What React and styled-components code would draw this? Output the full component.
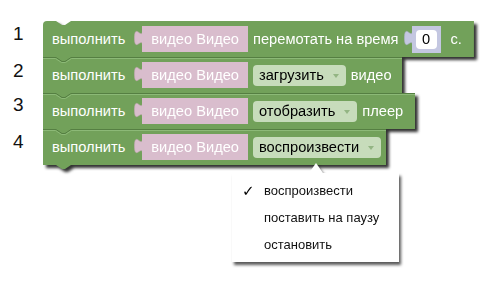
import React from "react";
import styled, { createGlobalStyle, css } from "styled-components";

const GREEN = "#72a15a";
const PINK = "#d9bdcd";
const PINK_EDGE = "#c7a9b9";
const LAV = "#c4c7e1";
const LAV_EDGE = "#b0b3d0";
const DD_BG = "#c7dcbb";

const Global = createGlobalStyle`
  html, body { margin: 0; padding: 0; background: #fff; }
  body { font-family: "Liberation Sans", Arial, sans-serif; }
`;

const Page = styled.div`
  position: relative;
  width: 501px;
  height: 290px;
  padding-top: 21px;
  box-sizing: border-box;
  overflow: hidden;
`;

const Workspace = styled.div`
  display: flex;
  align-items: flex-start;
`;

const Labels = styled.div`
  display: grid;
  grid-auto-rows: 36px;
  width: 43px;
  padding-left: 13px;
  box-sizing: border-box;
`;

const Num = styled.div`
  font-size: 19px;
  line-height: 19px;
  padding-top: ${(p) => p.$top}px;
  color: #111;
`;

const Stack = styled.div`
  display: flex;
  flex-direction: column;
  align-items: flex-start;
  filter: drop-shadow(3px 3px 1.5px rgba(0, 0, 0, 0.8));
`;

const Block = styled.div`
  position: relative;
  display: flex;
  align-items: center;
  height: 36px;
  background: ${GREEN};
  padding-left: 9px;
  padding-right: ${(p) => p.$pr}px;
  gap: 5px;
  color: #fff;
  font-size: 14.67px;
  white-space: nowrap;
  ${(p) =>
    p.$first &&
    css`
      border-top-left-radius: 4px;
      clip-path: polygon(0 0, 13px 0, 19px 4px, 22px 4px, 28px 0, 100% 0, 100% 100%, 0 100%);
    `}
  ${(p) =>
    p.$last &&
    css`
      &::after {
        content: "";
        position: absolute;
        left: 13px;
        bottom: -4px;
        width: 15px;
        height: 4px;
        background: ${GREEN};
        clip-path: polygon(0 0, 100% 0, 9px 100%, 6px 100%);
      }
    `}
`;

const Seam = styled.svg`
  position: absolute;
  top: 0;
  left: 0;
  width: 100%;
  height: 6px;
  overflow: hidden;
  pointer-events: none;
`;

const Label = styled.span`
  display: block;
  margin-left: ${(p) => p.$ml || 0}px;
  margin-right: ${(p) => p.$mr || 0}px;
`;

const Socket = styled.div`
  display: flex;
  align-items: center;
`;

const TabSvg = styled.svg`
  display: block;
  flex: none;
  width: 8px;
  height: ${(p) => p.$h}px;
`;

const ValueBox = styled.div`
  display: flex;
  align-items: center;
  height: ${(p) => p.$h}px;
  padding: 0 ${(p) => p.$px}px;
  background: ${(p) => p.$bg};
  box-sizing: border-box;
  color: #fff;
`;

const NumberField = styled.div`
  display: flex;
  align-items: center;
  justify-content: center;
  width: 21px;
  height: 19px;
  border-radius: 4px;
  background: #fff;
  color: #000;
`;

const Dropdown = styled.div`
  display: flex;
  align-items: center;
  gap: 9px;
  height: 21px;
  padding: 0 7px 0 6px;
  border-radius: 4px;
  background: ${DD_BG};
  color: #000;
`;

const Caret = styled.span`
  display: block;
  width: 0;
  height: 0;
  border-left: 3px solid transparent;
  border-right: 3px solid transparent;
  border-top: 4px solid #93b583;
  margin-top: 1px;
`;

const Menu = styled.div`
  position: absolute;
  left: 232px;
  top: 173px;
  width: 167px;
  padding: 4px 0;
  background: #fff;
  filter: drop-shadow(2px 3px 1.5px rgba(0, 0, 0, 0.65));
  &::before {
    content: "";
    position: absolute;
    top: -10px;
    left: 77px;
    width: 14px;
    height: 10px;
    background: #fff;
    clip-path: polygon(50% 0, 100% 100%, 0 100%);
  }
`;

const MenuItem = styled.div`
  position: relative;
  display: flex;
  align-items: center;
  height: 27px;
  padding-left: 32px;
  font-size: 13px;
  color: #111;
`;

const Check = styled.span`
  position: absolute;
  left: 10px;
  top: 50%;
  transform: translateY(-50%);
  font-family: "DejaVu Sans", sans-serif;
  font-size: 15px;
  color: #000;
`;

function Tab({ fill, stroke, h = 26 }) {
  return (
    <TabSvg $h={h} viewBox={`0 0 8 ${h}`}>
      <path
        d="M8.5,4.5 c0,10 -8,-8 -8,7.5 s8,-2.5 8,8 Z"
        fill={fill}
        stroke={stroke}
        strokeWidth="0.6"
      />
    </TabSvg>
  );
}

function VideoInput() {
  return (
    <Socket>
      <Tab fill={PINK} stroke={PINK_EDGE} />
      <ValueBox $h={26} $px={9} $bg={PINK}>
        видео Видео
      </ValueBox>
    </Socket>
  );
}

function SeamLine() {
  return (
    <Seam>
      <path d="M0,0.5 H13 L19,4.5 H22 L28,0.5 H3000" fill="none" stroke="#557f42" strokeWidth="1" />
      <path d="M0,1.5 H12.5 L18.5,5.5 H22.5 L28.5,1.5 H3000" fill="none" stroke="#8cb977" strokeWidth="1" />
    </Seam>
  );
}

function Select({ children }) {
  return (
    <Dropdown>
      <span>{children}</span>
      <Caret />
    </Dropdown>
  );
}

export default function App() {
  return (
    <>
      <Global />
      <Page>
        <Workspace>
          <Labels>
            <Num $top={3}>1</Num>
            <Num $top={4}>2</Num>
            <Num $top={2}>3</Num>
            <Num $top={3}>4</Num>
          </Labels>
          <Stack>
            <Block $first $pr={12}>
              <Label $mr={4}>выполнить</Label>
              <VideoInput />
              <Label>перемотать на время</Label>
              <Socket>
                <Tab fill={LAV} stroke={LAV_EDGE} h={27} />
                <ValueBox $h={27} $px={4} $bg={LAV}>
                  <NumberField>0</NumberField>
                </ValueBox>
              </Socket>
              <Label $ml={5}>с.</Label>
            </Block>
            <Block $pr={10}>
              <SeamLine />
              <Label $mr={4}>выполнить</Label>
              <VideoInput />
              <Select>загрузить</Select>
              <Label>видео</Label>
            </Block>
            <Block $pr={12}>
              <SeamLine />
              <Label $mr={4}>выполнить</Label>
              <VideoInput />
              <Select>отобразить</Select>
              <Label>плеер</Label>
            </Block>
            <Block $last $pr={5}>
              <SeamLine />
              <Label $mr={4}>выполнить</Label>
              <VideoInput />
              <Select>воспроизвести</Select>
            </Block>
          </Stack>
        </Workspace>
        <Menu>
          <MenuItem>
            <Check>✓</Check>
            воспроизвести
          </MenuItem>
          <MenuItem>поставить на паузу</MenuItem>
          <MenuItem>остановить</MenuItem>
        </Menu>
      </Page>
    </>
  );
}
